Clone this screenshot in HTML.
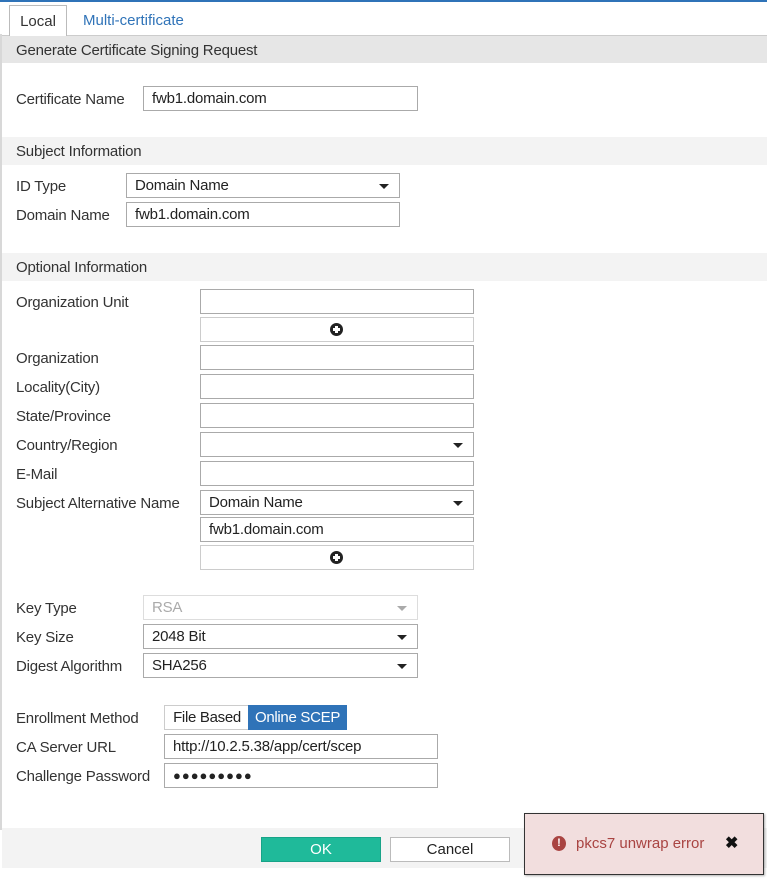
<!DOCTYPE html>
<html><head><meta charset="utf-8"><style>
*{box-sizing:border-box;margin:0;padding:0}
body{width:767px;height:879px;background:#fff;position:relative;overflow:hidden;font-family:"Liberation Sans",sans-serif;font-size:15px;color:#333}
.a{position:absolute}
.lbl{position:absolute;left:16px;font-size:15px;color:#333;line-height:19px;letter-spacing:-0.2px}
.in{position:absolute;border:1px solid #aaa;background:#fff;height:25px;padding-left:8px;line-height:24px;font-size:15px;color:#222;letter-spacing:-0.2px}
.sel:after{content:"";position:absolute;right:10px;top:10px;border-left:5px solid transparent;border-right:5px solid transparent;border-top:5px solid #222}
.dis:after{border-top-color:#aaa}
.band{position:absolute;left:2px;right:0;height:28px;background:#f3f3f3;padding-left:14px;line-height:30px;font-size:15px;color:#333;letter-spacing:-0.2px}
.plus{position:absolute;border:1px solid #ccc;background:#fff;height:25px}
.plus i{position:absolute;left:50%;top:5px;margin-left:-7px;width:13px;height:13px;border-radius:50%;background:#222}
.plus i:before{content:"";position:absolute;left:5px;top:3px;width:3px;height:7px;background:#fff}
.plus i:after{content:"";position:absolute;left:3px;top:5px;width:7px;height:3px;background:#fff}
</style></head><body>
<div class="a" style="left:0;top:0;width:767px;height:2px;background:#2f73b8"></div>
<div class="a" style="left:0;top:34px;width:2px;height:796px;background:#d8d8d8"></div>
<div class="a" style="left:9px;top:5px;width:58px;height:31px;border:1px solid #bbb;border-bottom:none;background:#fff;text-align:center;line-height:31px;z-index:2">Local</div>
<div class="a" style="left:83px;top:5px;line-height:31px;color:#2f73b8">Multi-certificate</div>
<div class="band" style="top:35px;background:#e6e6e6;border-top:1px solid #ccc">Generate Certificate Signing Request</div>

<div class="lbl" style="top:90px">Certificate Name</div>
<div class="in" style="left:143px;top:86px;width:275px">fwb1.domain.com</div>

<div class="band" style="top:137px">Subject Information</div>
<div class="lbl" style="top:177px">ID Type</div>
<div class="in sel" style="left:126px;top:173px;width:274px">Domain Name</div>
<div class="lbl" style="top:206px">Domain Name</div>
<div class="in" style="left:126px;top:202px;width:274px">fwb1.domain.com</div>

<div class="band" style="top:253px">Optional Information</div>
<div class="lbl" style="top:293px">Organization Unit</div>
<div class="in" style="left:200px;top:289px;width:274px"></div>
<div class="plus" style="left:200px;top:317px;width:274px"><i></i></div>
<div class="lbl" style="top:349px">Organization</div>
<div class="in" style="left:200px;top:345px;width:274px"></div>
<div class="lbl" style="top:378px">Locality(City)</div>
<div class="in" style="left:200px;top:374px;width:274px"></div>
<div class="lbl" style="top:407px">State/Province</div>
<div class="in" style="left:200px;top:403px;width:274px"></div>
<div class="lbl" style="top:436px">Country/Region</div>
<div class="in sel" style="left:200px;top:432px;width:274px"></div>
<div class="lbl" style="top:465px">E-Mail</div>
<div class="in" style="left:200px;top:461px;width:274px"></div>
<div class="lbl" style="top:494px">Subject Alternative Name</div>
<div class="in sel" style="left:200px;top:490px;width:274px">Domain Name</div>
<div class="in" style="left:200px;top:517px;width:274px">fwb1.domain.com</div>
<div class="plus" style="left:200px;top:545px;width:274px"><i></i></div>

<div class="lbl" style="top:599px">Key Type</div>
<div class="in sel dis" style="left:143px;top:595px;width:275px;border-color:#ddd;color:#aaa">RSA</div>
<div class="lbl" style="top:628px">Key Size</div>
<div class="in sel" style="left:143px;top:624px;width:275px">2048 Bit</div>
<div class="lbl" style="top:657px">Digest Algorithm</div>
<div class="in sel" style="left:143px;top:653px;width:275px">SHA256</div>

<div class="lbl" style="top:709px">Enrollment Method</div>
<div class="a" style="left:164px;top:705px;width:85px;height:25px;border:1px solid #ccc;border-right:none;line-height:24px;text-align:center;color:#222;letter-spacing:-0.3px">File Based</div>
<div class="a" style="left:248px;top:705px;width:99px;height:25px;background:#2f73b8;color:#fff;line-height:26px;text-align:center;letter-spacing:-0.3px">Online SCEP</div>
<div class="lbl" style="top:738px">CA Server URL</div>
<div class="in" style="left:164px;top:734px;width:274px">http://10.2.5.38/app/cert/scep</div>
<div class="lbl" style="top:767px">Challenge Password</div>
<div class="in" style="left:164px;top:763px;width:274px;font-size:13px;letter-spacing:1px">●●●●●●●●●</div>

<div class="a" style="left:2px;top:828px;width:765px;height:40px;background:#f3f3f3"></div>
<div class="a" style="left:261px;top:837px;width:120px;height:25px;background:#1fba9a;border:1px solid #18a388;color:#fff;text-align:center;line-height:24px">OK</div>
<div class="a" style="left:390px;top:837px;width:120px;height:25px;background:#fff;border:1px solid #bbb;color:#222;text-align:center;line-height:24px">Cancel</div>

<div class="a" style="left:524px;top:813px;width:240px;height:62px;background:#f2dede;border:1px solid #333;box-shadow:1px 1px 2px rgba(0,0,0,.3)">
<div class="a" style="left:27px;top:22px;width:14px;height:15px;border-radius:50%;background:#a94442;color:#fff;font-size:11px;font-weight:bold;text-align:center;line-height:15px">!</div>
<div class="a" style="left:51px;top:21px;color:#a94442;font-size:15px;line-height:18px">pkcs7 unwrap error</div>
<div class="a" style="left:200px;top:21px;color:#111;font-size:16px;font-weight:bold;line-height:18px">✖</div>
</div>
</body></html>
